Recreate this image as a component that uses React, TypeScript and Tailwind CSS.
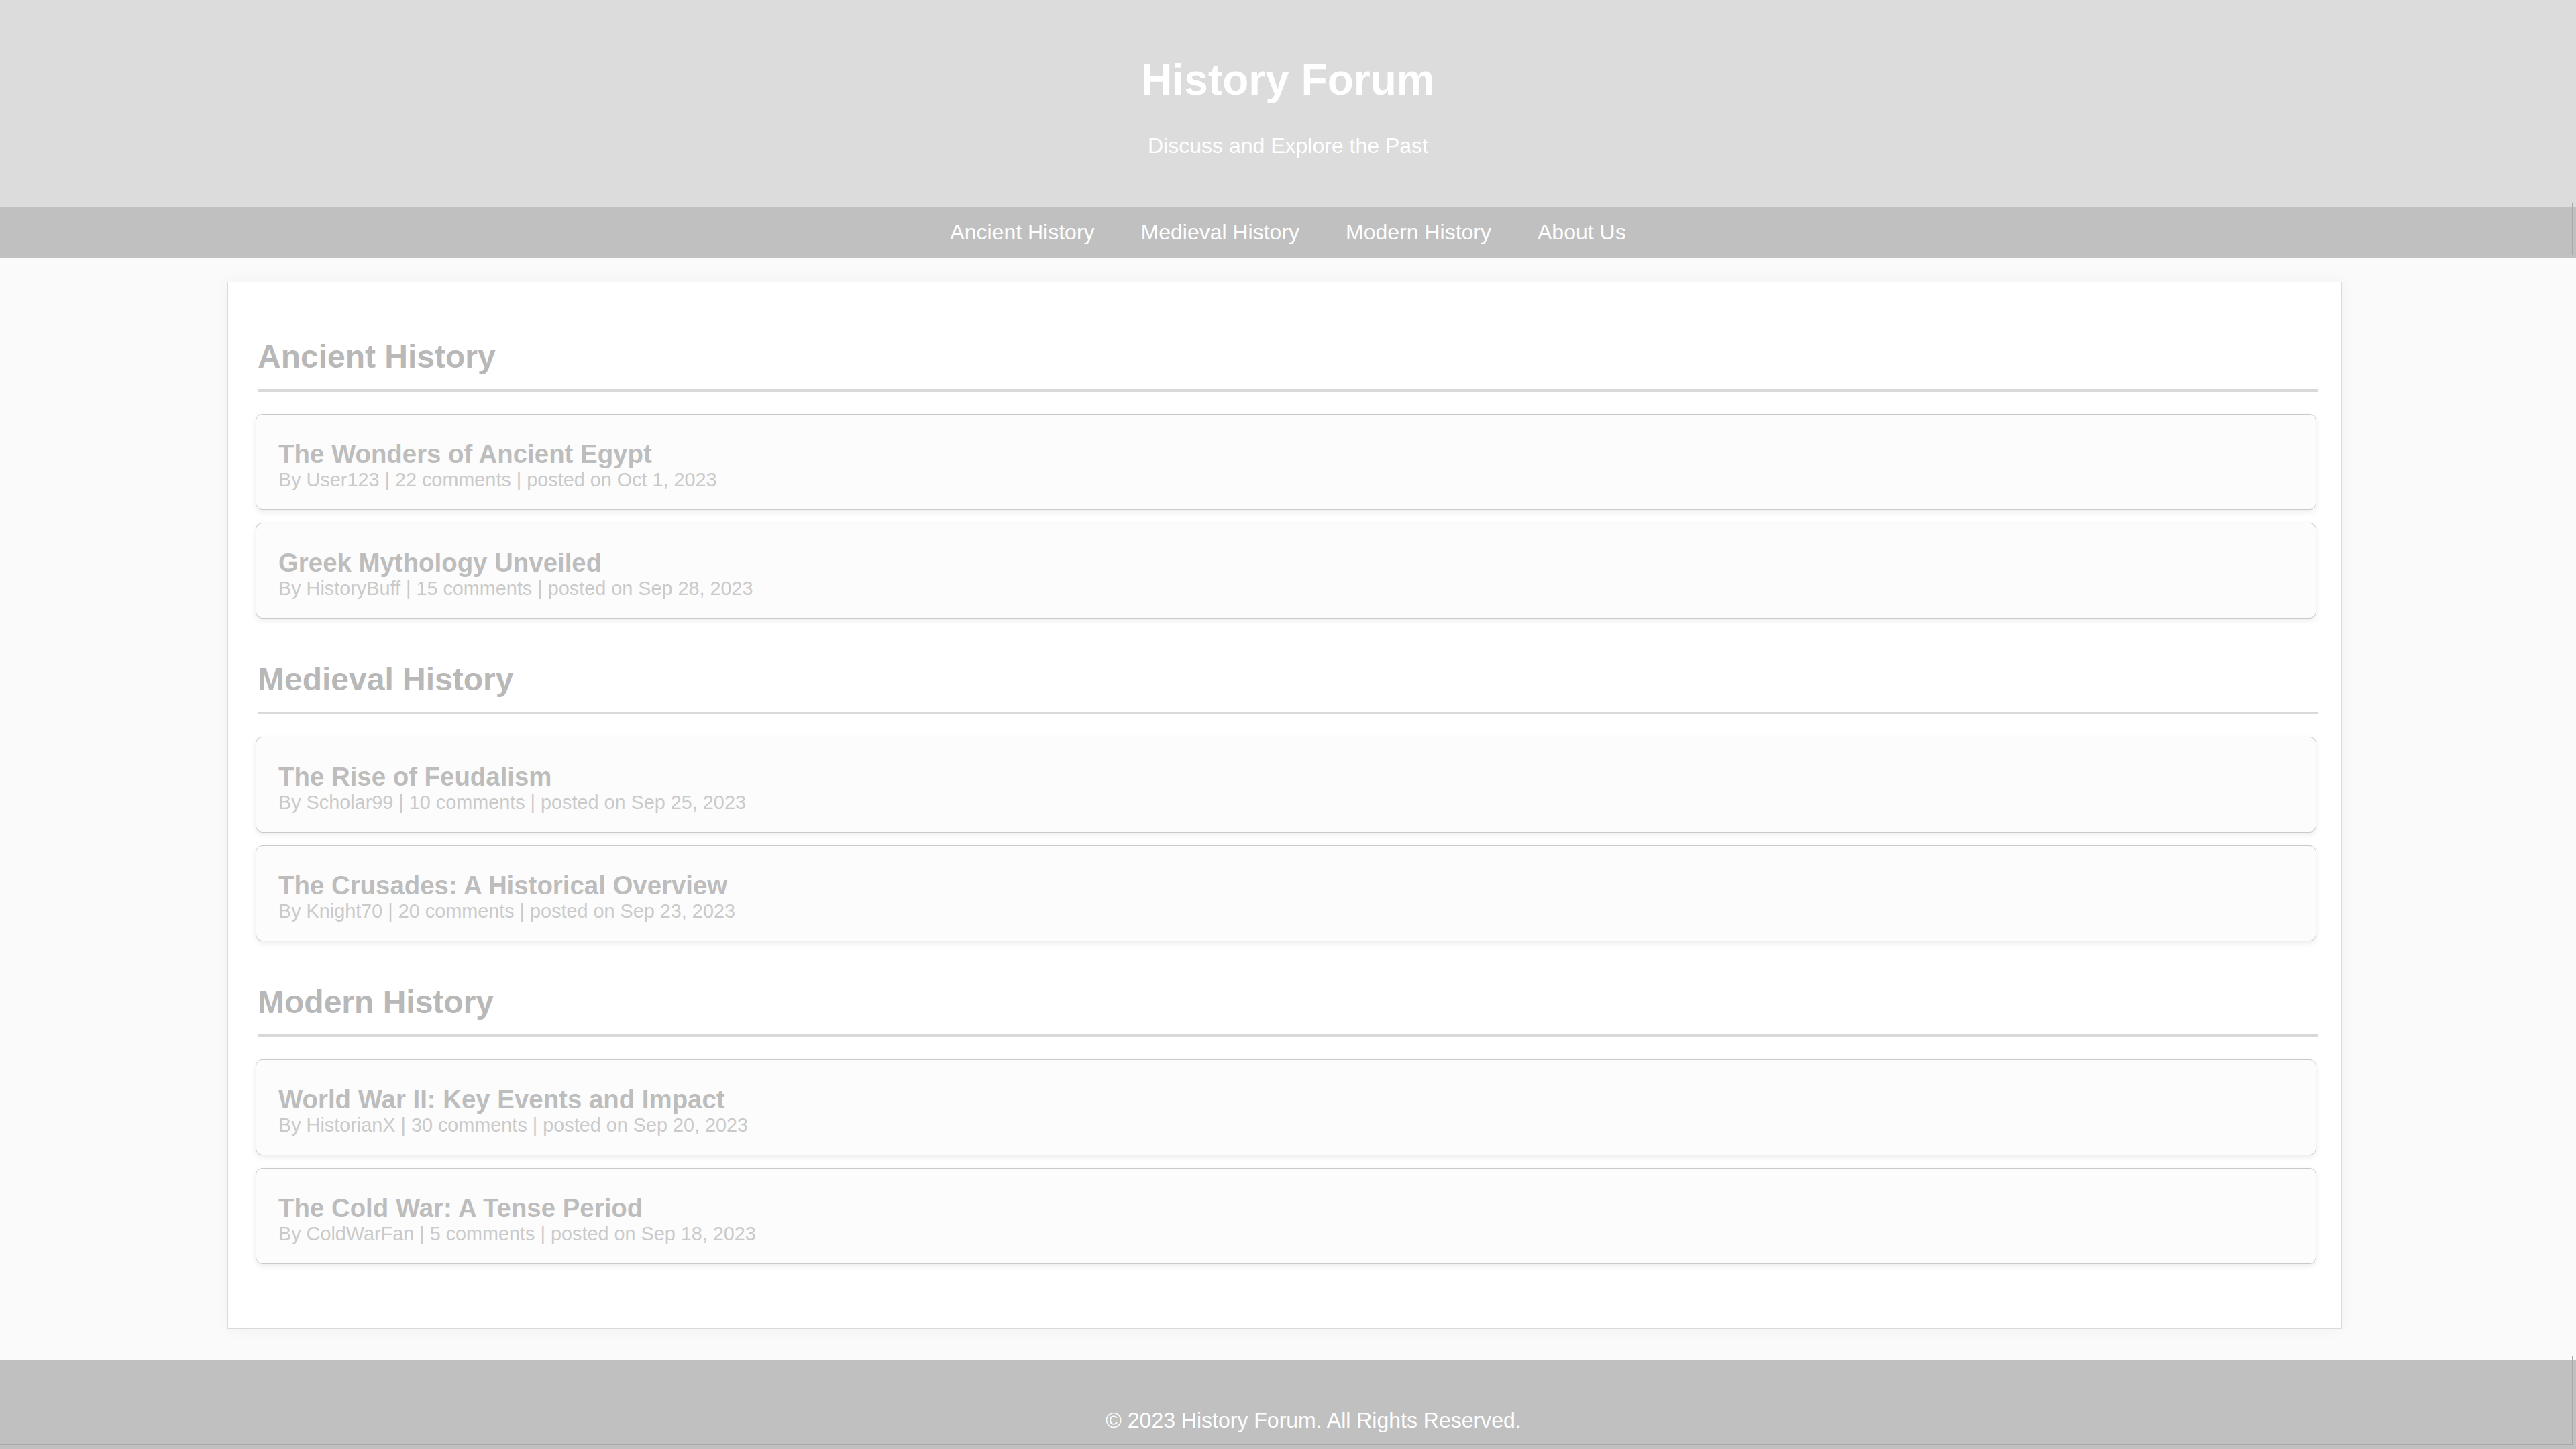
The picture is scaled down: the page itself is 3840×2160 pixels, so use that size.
import React from "react";

type Post = { title: string; meta: string };
type Section = { name: string; posts: Post[] };

const sections: Section[] = [
  {
    name: "Ancient History",
    posts: [
      { title: "The Wonders of Ancient Egypt", meta: "By User123 | 22 comments | posted on Oct 1, 2023" },
      { title: "Greek Mythology Unveiled", meta: "By HistoryBuff | 15 comments | posted on Sep 28, 2023" },
    ],
  },
  {
    name: "Medieval History",
    posts: [
      { title: "The Rise of Feudalism", meta: "By Scholar99 | 10 comments | posted on Sep 25, 2023" },
      { title: "The Crusades: A Historical Overview", meta: "By Knight70 | 20 comments | posted on Sep 23, 2023" },
    ],
  },
  {
    name: "Modern History",
    posts: [
      { title: "World War II: Key Events and Impact", meta: "By HistorianX | 30 comments | posted on Sep 20, 2023" },
      { title: "The Cold War: A Tense Period", meta: "By ColdWarFan | 5 comments | posted on Sep 18, 2023" },
    ],
  },
];

const navLinks = ["Ancient History", "Medieval History", "Modern History", "About Us"];

export default function App() {
  return (
    <div className="min-h-screen w-full bg-[#fafafa] font-['Liberation_Sans',Arial,sans-serif]">
      <header className="bg-[#dcdcdc] py-[40px] text-center text-white">
        <h1 className="mt-[42.88px] mb-[42.88px] text-[64px] font-bold leading-[1.15]">History Forum</h1>
        <p className="mt-0 mb-[32px] text-[32px] leading-[1.15]">Discuss and Explore the Past</p>
      </header>

      <nav className="relative flex justify-center gap-[69px] bg-[#c0c0c0] py-[20px] text-[32px] leading-[1.15] text-white">
        {navLinks.map((l) => (
          <a key={l} href="#" className="text-white no-underline">
            {l}
          </a>
        ))}
        <div className="absolute right-[5px] top-[-6px] h-[78px] w-px bg-[#a8a8a8]" />
      </nav>

      <main className="pt-[35px] pb-[46px]">
        <div className="ml-[339px] w-[3152px] border border-[#dadada] bg-white pt-[83px] pb-[96px] pl-[44px] pr-[34px] shadow-[0_0_24px_rgba(0,0,0,0.04)]">
          <div className="flex flex-col gap-[62.5px]">
            {sections.map((s) => (
              <section key={s.name}>
                <h2 className="border-b-[4px] border-[#d9d9d9] pb-[21px] text-[48px] font-bold leading-[1.15] text-[#b8b8b8]">
                  {s.name}
                </h2>
                <div className="mt-[33px] flex flex-col gap-[18.7px]">
                  {s.posts.map((p) => (
                    <div
                      key={p.title}
                      className="-ml-[3px] mr-[3px] rounded-[10px] border border-[#cacaca] bg-[#fcfcfc] pt-[37px] pb-[27px] pl-[33px] pr-[31px] shadow-[0_3px_8px_rgba(0,0,0,0.08)]"
                    >
                      <h3 className="text-[38.4px] font-bold leading-[1.15] text-[#bdbdbd]">{p.title}</h3>
                      <p className="text-[28.8px] leading-[1.15] text-[#cacaca]">{p.meta}</p>
                    </div>
                  ))}
                </div>
              </section>
            ))}
          </div>
        </div>
      </main>

      <footer className="relative bg-[#c0c0c0] pt-[72px] pb-[72px] text-center text-white">
        <p className="pl-[76px] text-[32px] leading-[1.15]">© 2023 History Forum. All Rights Reserved.</p>
        <div className="pointer-events-none absolute left-0 top-[-5px] h-[132px] w-[3835px] border-r border-b border-[#a8a8a8]" />
      </footer>
    </div>
  );
}
